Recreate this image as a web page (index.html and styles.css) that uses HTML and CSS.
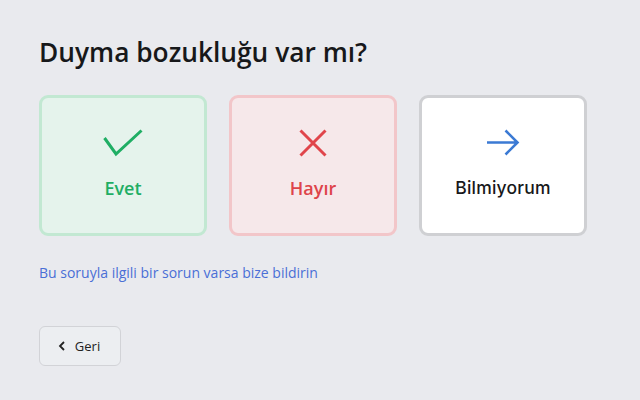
FILE: index.html
```html
<!DOCTYPE html>
<html lang="tr">
<head>
<meta charset="utf-8">
<link rel="stylesheet" href="styles.css">
</head>
<body>
<main class="page">
  <h1 class="title">Duyma bozukluğu var mı?</h1>
  <div class="options">
    <button class="card card-yes">
      <svg class="icon" width="40" height="28" viewBox="0 0 40 28"><path d="M1.5 9 L13 25 L38.5 1.5" fill="none" stroke="#1fae64" stroke-width="3"/></svg>
      <span class="label">Evet</span>
    </button>
    <button class="card card-no">
      <svg class="icon" width="28" height="28" viewBox="0 0 28 28"><path d="M1.5 1.5 L26.5 26.5 M26.5 1.5 L1.5 26.5" fill="none" stroke="#e0454b" stroke-width="3"/></svg>
      <span class="label">Hayır</span>
    </button>
    <button class="card card-unknown">
      <svg class="icon" width="34" height="28" viewBox="0 0 34 28"><path d="M1 13.5 H31 M19.5 1.5 L31.5 13.5 L19.5 25.5" fill="none" stroke="#3b7ad4" stroke-width="2.6"/></svg>
      <span class="label label-alt">Bilmiyorum</span>
    </button>
  </div>
  <a class="report" href="#">Bu soruyla ilgili bir sorun varsa bize bildirin</a>
  <button class="back">
    <svg width="8" height="10" viewBox="0 0 8 10"><path d="M6 1 L2 5 L6 9" fill="none" stroke="#222" stroke-width="1.8"/></svg>
    <span>Geri</span>
  </button>
</main>
</body>
</html>
```
FILE: styles.css
```css
html, body {
  margin: 0;
  background: #e9eaee;
}
.page {
  padding: 34px 39px 0;
  font-family: "Open Sans", "Liberation Sans", sans-serif;
  display: flex;
  flex-direction: column;
  align-items: flex-start;
}
.title {
  margin: 0;
  font-size: 26.3px;
  font-weight: 600;
  color: #17181a;
  line-height: 36px;
}
.options {
  display: flex;
  gap: 22px;
  margin-top: 25px;
}
.card {
  width: 168px;
  height: 141px;
  box-sizing: border-box;
  border: 3px solid;
  border-radius: 9px;
  display: flex;
  flex-direction: column;
  align-items: center;
  padding: 31px 0 0;
  font-family: inherit;
  cursor: pointer;
}
.card-yes { background: #e5f3ec; border-color: #c2e8d2; color: #1fae64; }
.card-no { background: #f6e8ea; border-color: #f2c6c9; color: #de444a; }
.card-unknown { background: #ffffff; border-color: #cfd0d3; color: #17181a; }
.icon { display: block; height: 28px; }
.label {
  margin-top: 19px;
  font-size: 18px;
  font-weight: 600;
  line-height: 24px;
}
.label-alt {
  font-family: "Inter", "Open Sans", sans-serif;
  font-size: 17.5px;
  font-weight: 500;
  letter-spacing: 0.2px;
}
.report {
  margin-top: 27px;
  font-size: 14px;
  color: #4a6fd6;
  text-decoration: none;
  line-height: 20px;
}
.back {
  margin-top: 43px;
  width: 82px;
  height: 40px;
  box-sizing: border-box;
  border: 1px solid #d2d3d7;
  border-radius: 6px;
  background: #eceef1;
  display: flex;
  align-items: center;
  justify-content: center;
  gap: 9px;
  font-family: inherit;
  font-size: 13px;
  color: #222;
  padding: 0 2px 0 0;
}
```
